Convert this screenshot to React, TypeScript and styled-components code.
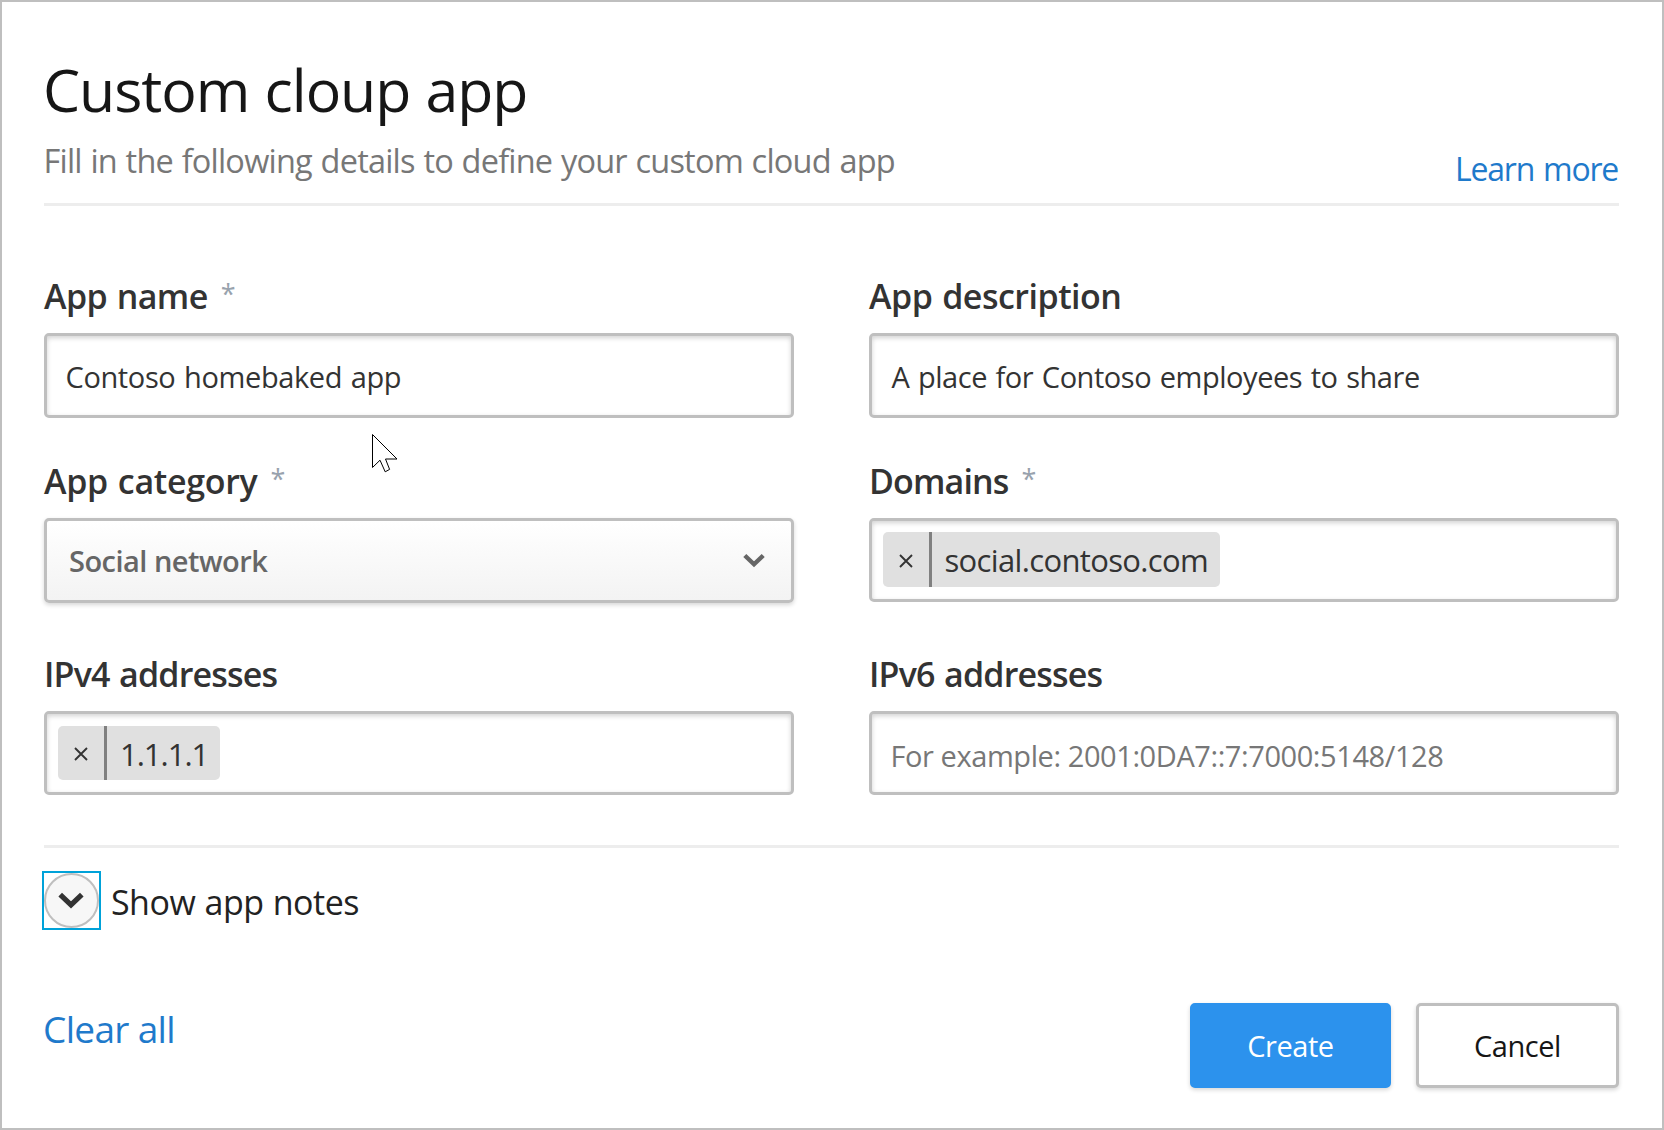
import React from 'react';
import styled, { createGlobalStyle } from 'styled-components';

const GlobalStyle = createGlobalStyle`
  *, *::before, *::after { box-sizing: border-box; }
  body {
    margin: 0;
    background: #fff;
    font-family: 'Open Sans', 'Noto Sans', sans-serif;
    color: #333;
  }
`;

const Dialog = styled.main`
  position: relative;
  width: 1664px;
  height: 1130px;
  padding: 46px 43px 0 42px;
  border: 2px solid #bfbfbf;
  background: #fff;
  overflow: hidden;
  white-space: nowrap;
`;

const Header = styled.header`
  display: flex;
  align-items: flex-end;
  justify-content: space-between;
  height: 158px;
  border-bottom: 3px solid #ededed;
`;

const Heading = styled.div`
  display: flex;
  flex-direction: column;
  gap: 8px;
  padding-bottom: 18px;
`;

const Title = styled.h1`
  margin: 0 0 0 -1px;
  font-size: 59px;
  font-weight: 400;
  line-height: 80px;
  letter-spacing: -1.05px;
  word-spacing: 1px;
  color: #161616;
`;

const Subtitle = styled.p`
  margin: 0 0 0 -0.5px;
  font-size: 32.5px;
  line-height: 48px;
  letter-spacing: -0.79px;
  word-spacing: 1px;
  color: #777;
`;

const Link = styled.a`
  color: #1f7acb;
  text-decoration: none;
`;

const LearnMore = styled(Link)`
  padding: 0 1px 10px 0;
  font-size: 32px;
  line-height: 48px;
  letter-spacing: -1.25px;
  word-spacing: 2px;
`;

const Form = styled.form`
  padding: 66px 0 50px;
  border-bottom: 3px solid #ededed;
`;

const FieldRow = styled.div<{ $after?: number }>`
  display: grid;
  grid-template-columns: 750px 750px;
  column-gap: 75px;
  margin-bottom: ${({ $after = 0 }) => $after}px;
`;

const Field = styled.div`
  display: flex;
  flex-direction: column;
  gap: 13px;
`;

const Label = styled.label<{ $track: number }>`
  display: flex;
  gap: 13px;
  font-size: 34px;
  font-weight: 600;
  line-height: 48px;
  letter-spacing: ${({ $track }) => $track}px;
  word-spacing: 1.5px;
`;

const Required = styled.span`
  font-size: 27px;
  font-weight: 400;
  line-height: 44px;
  color: #98a2ad;
`;

const Box = styled.div<{ $height?: number }>`
  display: flex;
  align-items: center;
  height: ${({ $height = 85 }) => $height}px;
  border: 3px solid #bfbfbf;
  border-radius: 5px;
  background: #fff;
  box-shadow: inset 0 2px 5px rgba(0, 0, 0, 0.18);
`;

const InputText = styled.span<{ $indent?: number; $track: number }>`
  padding: 2px 0 0 ${({ $indent = 18.5 }) => $indent}px;
  font-size: 29px;
  line-height: 40px;
  letter-spacing: ${({ $track }) => $track}px;
  word-spacing: 1.5px;
`;

const Placeholder = styled(InputText)`
  padding-top: 5px;
  word-spacing: 0;
  color: #777;
`;

const SelectBox = styled(Box)`
  justify-content: space-between;
  padding: 0 26px 0 22px;
  background: linear-gradient(#fff, #f3f3f3);
  box-shadow: 0 2px 4px rgba(0, 0, 0, 0.16);
  font-size: 29px;
  font-weight: 600;
  letter-spacing: -0.52px;
  color: #666;
`;

const Tags = styled(Box)<{ $lift: number }>`
  padding-bottom: ${({ $lift }) => $lift}px;
`;

const Tag = styled.span<{ $width: number; $height: number }>`
  display: flex;
  align-items: stretch;
  width: ${({ $width }) => $width}px;
  height: ${({ $height }) => $height}px;
  margin-left: 11px;
  border-radius: 5px;
  background: #e0e0e0;
`;

const TagRemove = styled.button`
  display: flex;
  align-items: center;
  justify-content: center;
  width: 49px;
  padding: 2px 0 0 0;
  border: 0;
  border-right: 3px solid #808080;
  background: none;
`;

const TagText = styled.span<{ $indent: number; $track: number }>`
  align-self: center;
  padding: 1px 0 0 ${({ $indent }) => $indent}px;
  font-size: 31px;
  line-height: 44px;
  letter-spacing: ${({ $track }) => $track}px;
`;

const Notes = styled.div`
  display: flex;
  align-items: center;
  gap: 12px;
  height: 55px;
  margin-top: 25px;
`;

const RoundToggle = styled.button`
  display: flex;
  align-items: center;
  justify-content: center;
  width: 55px;
  height: 55px;
  padding: 0;
  border: 0;
  outline: 2px solid #00a2d9;
  background: #fff;
`;

const ToggleFace = styled.span`
  display: flex;
  align-items: center;
  justify-content: center;
  width: 55px;
  height: 55px;
  padding-right: 1px;
  border: 2.5px solid #bfbfbf;
  border-radius: 50%;
  background: #f7f7f7;
`;

const NotesLabel = styled.span`
  padding-top: 2px;
  font-size: 34px;
  line-height: 48px;
  letter-spacing: -0.52px;
  word-spacing: 1px;
  color: #222;
`;

const Footer = styled.footer`
  display: flex;
  align-items: flex-start;
  justify-content: space-between;
  margin-top: 75px;
`;

const ClearAll = styled(Link)`
  margin: 1px 0 0 -1px;
  font-size: 37px;
  line-height: 50px;
  letter-spacing: -0.68px;
`;

const Actions = styled.div`
  display: flex;
  gap: 25px;
`;

const Button = styled.button<{ $primary?: boolean }>`
  width: ${({ $primary }) => ($primary ? 201 : 203)}px;
  height: 85px;
  padding: 0;
  border: 3px solid ${({ $primary }) => ($primary ? '#2c92ed' : '#bfbfbf')};
  border-radius: 5px;
  background: ${({ $primary }) => ($primary ? '#2c92ed' : '#fff')};
  box-shadow: 0 2px 4px rgba(0, 0, 0, 0.16);
  font-family: inherit;
  font-size: 29px;
  letter-spacing: -0.45px;
  color: ${({ $primary }) => ($primary ? '#fff' : '#161616')};
`;

const Pointer = styled.svg`
  position: absolute;
  left: 370px;
  top: 432px;
`;

const CloseIcon = () => (
  <svg width="14" height="14" viewBox="0 0 14 14" fill="none" stroke="#333" strokeWidth="1.9">
    <path d="M1 1L13 13M13 1L1 13" />
  </svg>
);

function TagItem(props: { text: string; width: number; height: number; indent: number; track: number }) {
  return (
    <Tag $width={props.width} $height={props.height}>
      <TagRemove type="button" aria-label="Remove"><CloseIcon /></TagRemove>
      <TagText $indent={props.indent} $track={props.track}>{props.text}</TagText>
    </Tag>
  );
}

export default function App() {
  return (
    <>
      <GlobalStyle />
      <Dialog>
        <Header>
          <Heading>
            <Title>Custom cloup app</Title>
            <Subtitle>Fill in the following details to define your custom cloud app</Subtitle>
          </Heading>
          <LearnMore>Learn more</LearnMore>
        </Header>

        <Form>
          <FieldRow $after={39}>
            <Field>
              <Label $track={-0.6}>App name<Required>*</Required></Label>
              <Box><InputText $track={-0.38}>Contoso homebaked app</InputText></Box>
            </Field>
            <Field>
              <Label $track={-0.5}>App description</Label>
              <Box><InputText $indent={19.5} $track={-0.46}>A place for Contoso employees to share</InputText></Box>
            </Field>
          </FieldRow>

          <FieldRow $after={47}>
            <Field>
              <Label $track={-0.32}>App category<Required>*</Required></Label>
              <SelectBox>
                Social network
                <svg width="22" height="16" viewBox="0 0 22 16" fill="none" stroke="#666" strokeWidth="4.4">
                  <path d="M1.8 2.5L11 11.3L20.2 2.5" />
                </svg>
              </SelectBox>
            </Field>
            <Field>
              <Label $track={-0.84}>Domains<Required>*</Required></Label>
              <Tags $height={84} $lift={1}>
                <TagItem text="social.contoso.com" width={337} height={55} indent={12.5} track={-0.65} />
              </Tags>
            </Field>
          </FieldRow>

          <FieldRow>
            <Field>
              <Label $track={-0.82}>IPv4 addresses</Label>
              <Tags $height={84} $lift={0}>
                <TagItem text="1.1.1.1" width={162} height={54} indent={13} track={-1} />
              </Tags>
            </Field>
            <Field>
              <Label $track={-0.82}>IPv6 addresses</Label>
              <Box $height={84}>
                <Placeholder $track={-0.42}>For example: 2001:0DA7::7:7000:5148/128</Placeholder>
              </Box>
            </Field>
          </FieldRow>
        </Form>

        <Notes>
          <RoundToggle type="button" aria-label="Show app notes">
            <ToggleFace>
              <svg width="26" height="17" viewBox="0 0 26 17" fill="none" stroke="#333" strokeWidth="5.2">
                <path d="M2.2 2.7L13 13L23.8 2.7" />
              </svg>
            </ToggleFace>
          </RoundToggle>
          <NotesLabel>Show app notes</NotesLabel>
        </Notes>

        <Footer>
          <ClearAll>Clear all</ClearAll>
          <Actions>
            <Button type="button" $primary>Create</Button>
            <Button type="button">Cancel</Button>
          </Actions>
        </Footer>

        <Pointer width="28" height="40" viewBox="0 0 28 40" fill="#fff" stroke="#000" strokeWidth="1">
          <path d="M0.5 0.5V33.5L8 26.2L13.2 37.8L17.6 35.4L13.5 25H25Z" />
        </Pointer>
      </Dialog>
    </>
  );
}
